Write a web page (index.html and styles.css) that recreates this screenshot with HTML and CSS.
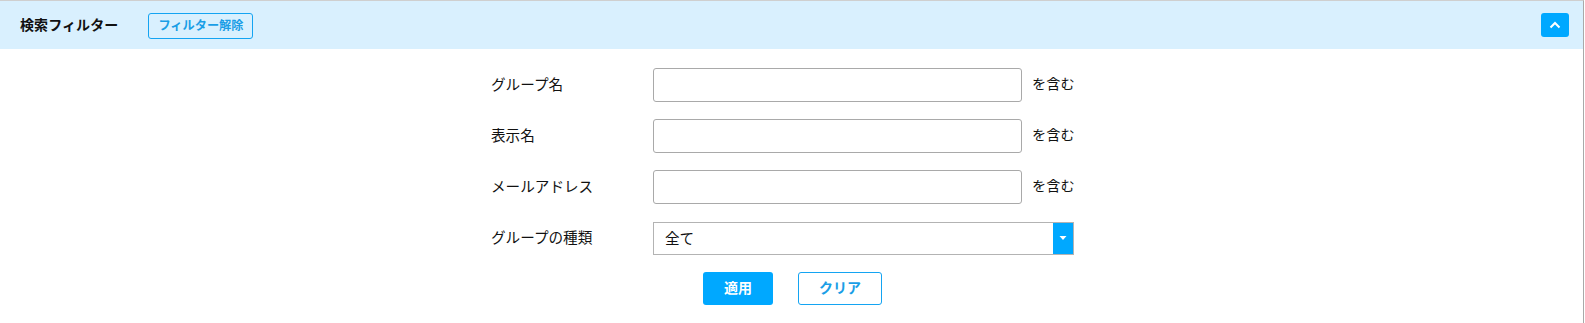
FILE: index.html
```html
<!DOCTYPE html>
<html lang="ja">
<head>
<meta charset="utf-8">
<title>検索フィルター</title>
<link rel="stylesheet" href="styles.css">
</head>
<body>
<div class="panel">
  <div class="panel-header">
    <span class="panel-title">検索フィルター</span>
    <button class="btn-reset" type="button">フィルター解除</button>
    <button class="btn-collapse" type="button" aria-label="折りたたむ">
      <svg width="12" height="8" viewBox="0 0 12 8"><path d="M1.5 6.5 L6 2 L10.5 6.5" fill="none" stroke="#fff" stroke-width="2"/></svg>
    </button>
  </div>
  <form class="filter-form">
    <div class="row">
      <label class="lbl">グループ名</label>
      <input class="txt" type="text">
      <span class="suffix">を含む</span>
    </div>
    <div class="row">
      <label class="lbl">表示名</label>
      <input class="txt" type="text">
      <span class="suffix">を含む</span>
    </div>
    <div class="row">
      <label class="lbl">メールアドレス</label>
      <input class="txt" type="text">
      <span class="suffix">を含む</span>
    </div>
    <div class="row">
      <label class="lbl">グループの種類</label>
      <div class="select">
        <span class="select-value">全て</span>
        <span class="select-arrow"><svg width="8" height="6" viewBox="0 0 8 6"><path d="M0.5 1 L7.5 1 L4 5 Z" fill="#fff"/></svg></span>
      </div>
    </div>
    <div class="actions">
      <button class="btn-apply" type="button">適用</button>
      <button class="btn-clear" type="button">クリア</button>
    </div>
  </form>
</div>
</body>
</html>
```

FILE: styles.css
```css
* { box-sizing: border-box; }
html, body { margin: 0; padding: 0; background: #fff; }
body {
  font-family: "Noto Sans CJK JP", "Noto Sans", sans-serif;
  font-size: 14.6px;
  color: #111;
}
.panel {
  width: 1584px;
  height: 323px;
  border-top: 1px solid #cfcfcf;
  border-right: 1px solid #a9a9a9;
}
.panel-header {
  height: 48px;
  background: #d9f0fe;
  display: flex;
  align-items: center;
  padding: 0 14px 0 20px;
}
.panel-title {
  font-weight: bold;
  font-size: 14px;
  letter-spacing: 0.1px;
  color: #111;
  padding-bottom: 2px;
}
.btn-reset {
  margin-left: 30px;
  height: 26px;
  width: 105px;
  padding: 0;
  border: 1px solid #14a4f2;
  border-radius: 3px;
  background: transparent;
  color: #1a9ee6;
  font-family: inherit;
  font-weight: bold;
  font-size: 12.2px;
  line-height: 1;
  margin-top: 1px;
}
.btn-collapse {
  margin-left: auto;
  width: 28px;
  height: 24px;
  border: 0;
  border-radius: 3px;
  background: #00a8ff;
  display: flex;
  align-items: center;
  justify-content: center;
  padding: 0;
}
.filter-form {
  padding: 19px 0 0 491px;
  display: flex;
  flex-direction: column;
  gap: 17px;
}
.row {
  display: flex;
  align-items: center;
  height: 34px;
}
.lbl {
  width: 162px;
  font-size: 14.6px;
  color: #111;
  padding-bottom: 4px;
}
.txt {
  width: 369px;
  height: 34px;
  border: 1px solid #a9a9a9;
  border-radius: 3px;
  padding: 0 8px;
  font-family: inherit;
  font-size: 14px;
  background: #fff;
}
.suffix {
  margin-left: 10px;
  font-size: 14.2px;
  padding-bottom: 4px;
}
.select {
  width: 421px;
  height: 33px;
  border: 1px solid #b3b3b3;
  display: flex;
  align-items: stretch;
  background: #fff;
}
.select-value {
  flex: 1;
  display: flex;
  align-items: center;
  padding-left: 11px;
  padding-bottom: 2px;
  font-size: 14.6px;
}
.select-arrow {
  width: 20px;
  background: #00a8ff;
  display: flex;
  align-items: center;
  justify-content: center;
}
.actions {
  display: flex;
  gap: 25px;
  padding-left: 212px;
  margin-top: 0;
}
.btn-apply, .btn-clear {
  height: 33px;
  border-radius: 3px;
  font-family: inherit;
  font-weight: bold;
  font-size: 14px;
  padding: 0 0 3px;
}
.btn-apply {
  width: 70px;
  border: 0;
  background: #00a8ff;
  color: #fff;
}
.btn-clear {
  width: 84px;
  border: 1px solid #14a4f2;
  background: #fff;
  color: #1a9ee6;
}
```
